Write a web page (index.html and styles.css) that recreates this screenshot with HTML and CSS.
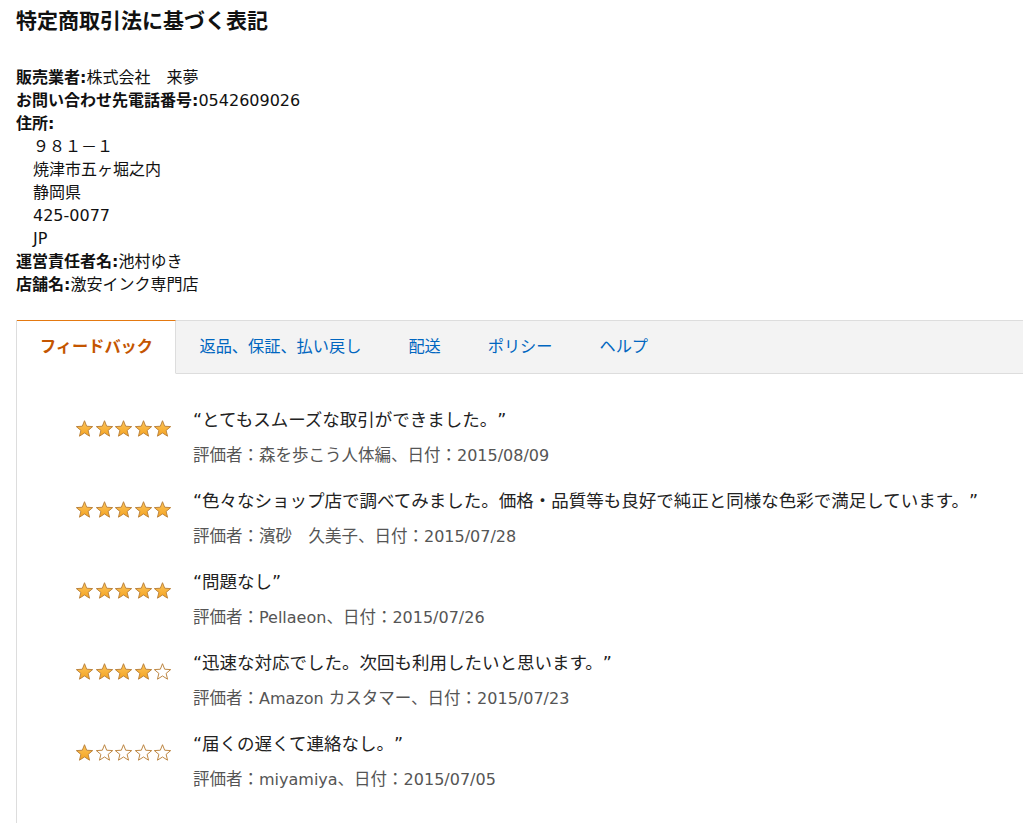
FILE: index.html
```html
<!DOCTYPE html>
<html lang="ja">
<head>
<meta charset="utf-8">
<title>特定商取引法に基づく表記</title>
<link rel="stylesheet" href="styles.css">
</head>
<body>
<svg class="defs" width="0" height="0" aria-hidden="true">
  <defs>
    <linearGradient id="gold" x1="0" y1="0" x2="0" y2="1">
      <stop offset="0" stop-color="#fdc55a"/>
      <stop offset="1" stop-color="#f4a321"/>
    </linearGradient>
    <polygon id="star" points="9,0.8 11.3,6.6 17.6,7 12.8,11 14.3,17.1 9,13.7 3.7,17.1 5.2,11 0.4,7 6.7,6.6"/>
  </defs>
</svg>
<div class="page">
  <h1 class="title">特定商取引法に基づく表記</h1>
  <div class="seller">
    <div class="line"><b>販売業者:</b>株式会社　来夢</div>
    <div class="line"><b>お問い合わせ先電話番号:</b>0542609026</div>
    <div class="line"><b>住所:</b></div>
    <div class="addr">
      <div class="line">９８１－１</div>
      <div class="line">焼津市五ヶ堀之内</div>
      <div class="line">静岡県</div>
      <div class="line">425-0077</div>
      <div class="line">JP</div>
    </div>
    <div class="line"><b>運営責任者名:</b>池村ゆき</div>
    <div class="line"><b>店舗名:</b>激安インク専門店</div>
  </div>

  <div class="panel">
    <ul class="tabs">
      <li class="tab active">フィードバック</li>
      <li class="tab">返品、保証、払い戻し</li>
      <li class="tab">配送</li>
      <li class="tab">ポリシー</li>
      <li class="tab">ヘルプ</li>
      <li class="tab-fill"></li>
    </ul>
    <div class="reviews">
      <div class="review">
        <div class="stars">
          <svg viewBox="-1 -1 20 20"><use href="#star" class="on"/></svg><svg viewBox="-1 -1 20 20"><use href="#star" class="on"/></svg><svg viewBox="-1 -1 20 20"><use href="#star" class="on"/></svg><svg viewBox="-1 -1 20 20"><use href="#star" class="on"/></svg><svg viewBox="-1 -1 20 20"><use href="#star" class="on"/></svg>
        </div>
        <div class="body">
          <div class="quote">“とてもスムーズな取引ができました。”</div>
          <div class="meta">評価者：森を歩こう人体編、日付：<span class="en">2015/08/09</span></div>
        </div>
      </div>
      <div class="review">
        <div class="stars">
          <svg viewBox="-1 -1 20 20"><use href="#star" class="on"/></svg><svg viewBox="-1 -1 20 20"><use href="#star" class="on"/></svg><svg viewBox="-1 -1 20 20"><use href="#star" class="on"/></svg><svg viewBox="-1 -1 20 20"><use href="#star" class="on"/></svg><svg viewBox="-1 -1 20 20"><use href="#star" class="on"/></svg>
        </div>
        <div class="body">
          <div class="quote">“色々なショップ店で調べてみました。価格・品質等も良好で純正と同様な色彩で満足しています。”</div>
          <div class="meta">評価者：濱砂　久美子、日付：<span class="en">2015/07/28</span></div>
        </div>
      </div>
      <div class="review">
        <div class="stars">
          <svg viewBox="-1 -1 20 20"><use href="#star" class="on"/></svg><svg viewBox="-1 -1 20 20"><use href="#star" class="on"/></svg><svg viewBox="-1 -1 20 20"><use href="#star" class="on"/></svg><svg viewBox="-1 -1 20 20"><use href="#star" class="on"/></svg><svg viewBox="-1 -1 20 20"><use href="#star" class="on"/></svg>
        </div>
        <div class="body">
          <div class="quote">“問題なし”</div>
          <div class="meta">評価者：<span class="en">Pellaeon</span>、日付：<span class="en">2015/07/26</span></div>
        </div>
      </div>
      <div class="review">
        <div class="stars">
          <svg viewBox="-1 -1 20 20"><use href="#star" class="on"/></svg><svg viewBox="-1 -1 20 20"><use href="#star" class="on"/></svg><svg viewBox="-1 -1 20 20"><use href="#star" class="on"/></svg><svg viewBox="-1 -1 20 20"><use href="#star" class="on"/></svg><svg viewBox="-1 -1 20 20"><use href="#star" class="off"/></svg>
        </div>
        <div class="body">
          <div class="quote">“迅速な対応でした。次回も利用したいと思います。”</div>
          <div class="meta">評価者：<span class="en">Amazon </span>カスタマー、日付：<span class="en">2015/07/23</span></div>
        </div>
      </div>
      <div class="review">
        <div class="stars">
          <svg viewBox="-1 -1 20 20"><use href="#star" class="on"/></svg><svg viewBox="-1 -1 20 20"><use href="#star" class="off"/></svg><svg viewBox="-1 -1 20 20"><use href="#star" class="off"/></svg><svg viewBox="-1 -1 20 20"><use href="#star" class="off"/></svg><svg viewBox="-1 -1 20 20"><use href="#star" class="off"/></svg>
        </div>
        <div class="body">
          <div class="quote">“届くの遅くて連絡なし。”</div>
          <div class="meta">評価者：<span class="en">miyamiya</span>、日付：<span class="en">2015/07/05</span></div>
        </div>
      </div>
    </div>
  </div>
</div>
</body>
</html>
```

FILE: styles.css
```css
html, body {
  margin: 0;
  padding: 0;
  background: #fff;
  overflow: hidden;
}
body {
  font-family: "DejaVu Sans", "Noto Sans CJK JP", sans-serif;
  color: #111;
  text-spacing-trim: space-all;
}
.defs {
  position: absolute;
  width: 0;
  height: 0;
}
.page {
  padding: 6px 0 0 16px;
}
.title {
  margin: 0 0 30px 0;
  font-size: 21px;
  line-height: 30px;
  font-weight: 700;
}
.seller {
  font-size: 16px;
}
.line {
  line-height: 23px;
  height: 23px;
}
.line b {
  font-weight: 700;
}
.addr {
  padding-left: 17px;
}
.panel {
  margin-top: 24px;
  margin-right: -20px;
  border-left: 1px solid #ddd;
  min-height: 520px;
}
.tabs {
  display: flex;
  list-style: none;
  margin: 0;
  padding: 0;
  font-size: 16.2px;
}
.tab {
  padding: 1px 23.5px 1px;
  height: 50px;
  line-height: 50px;
  color: #0066c0;
  background: #f3f3f3;
  border-top: 1px solid #ddd;
  border-bottom: 1px solid #ddd;
}
.tab.active {
  color: #c45500;
  font-weight: 700;
  background: #fff;
  border-top: 1px solid #e47911;
  border-bottom: 1px solid #fff;
  border-right: 1px solid #ddd;
  padding: 1px 22px 1px 23px;
}
.tab-fill {
  flex: 1;
  background: #f3f3f3;
  border-top: 1px solid #ddd;
  border-bottom: 1px solid #ddd;
}
.reviews {
  padding: 34px 0 0 58px;
}
.review {
  display: flex;
  margin-bottom: 21px;
}
.stars {
  width: 118px;
  flex: none;
  display: flex;
  gap: 0.5px;
  padding-top: 11px;
  height: 19px;
}
.stars svg {
  width: 19px;
  height: 19px;
  display: block;
}
.stars .on {
  fill: url(#gold);
  stroke: #b9813a;
  stroke-width: 1;
  stroke-linejoin: round;
}
.stars .off {
  fill: #fff;
  stroke: #b9813a;
  stroke-width: 1;
  stroke-linejoin: round;
}
.quote {
  font-size: 17.5px;
  line-height: 24px;
  height: 24px;
  color: #222;
}
.meta {
  margin-top: 12px;
  font-size: 16.5px;
  line-height: 24px;
  height: 24px;
  color: #555;
}
.meta .en {
  font-size: 16px;
}
```
